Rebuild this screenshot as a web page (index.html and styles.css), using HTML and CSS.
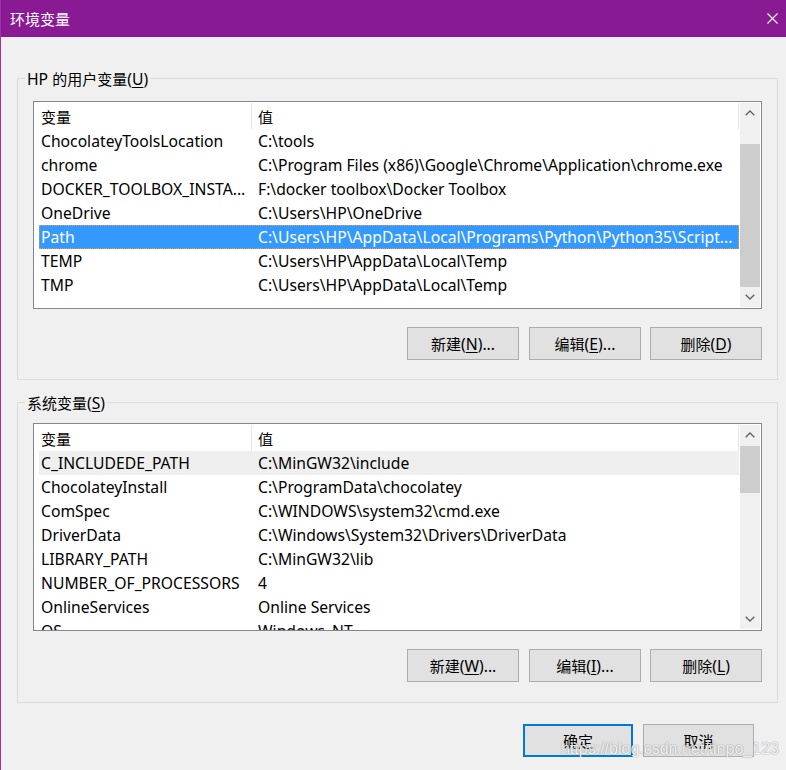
FILE: index.html
```html
<!DOCTYPE html>
<html lang="zh-CN">
<head>
<meta charset="utf-8">
<title>环境变量</title>
<link rel="stylesheet" href="styles.css">
</head>
<body>
<div class="window">
  <div class="titlebar">
    <span class="title cjk">环境变量</span>
    <svg class="close" width="11" height="11" viewBox="0 0 11 11"><path d="M0.5 0.5 L10.5 10.5 M10.5 0.5 L0.5 10.5" stroke="#fff" stroke-width="1.1" fill="none"/></svg>
  </div>
  <div class="content">
    <section class="group group--user">
      <div class="group-title">HP <span class="cjk">的用户变量</span>(<u>U</u>)</div>
      <div class="listbox">
        <div class="list-main">
          <div class="list-head">
            <div class="head-cell col-name"><span class="cjk">变量</span></div>
            <div class="head-cell col-val"><span class="cjk">值</span></div>
          </div>
          <div class="row"><div class="col-name">ChocolateyToolsLocation</div><div class="col-val">C:\tools</div></div>
          <div class="row"><div class="col-name">chrome</div><div class="col-val">C:\Program Files (x86)\Google\Chrome\Application\chrome.exe</div></div>
          <div class="row"><div class="col-name">DOCKER_TOOLBOX_INSTA...</div><div class="col-val">F:\docker toolbox\Docker Toolbox</div></div>
          <div class="row"><div class="col-name">OneDrive</div><div class="col-val">C:\Users\HP\OneDrive</div></div>
          <div class="row row--selected"><div class="col-name">Path</div><div class="col-val">C:\Users\HP\AppData\Local\Programs\Python\Python35\Script...</div></div>
          <div class="row"><div class="col-name">TEMP</div><div class="col-val">C:\Users\HP\AppData\Local\Temp</div></div>
          <div class="row"><div class="col-name">TMP</div><div class="col-val">C:\Users\HP\AppData\Local\Temp</div></div>
        </div>
        <div class="scrollbar">
          <div class="sb-btn"><svg width="10" height="6" viewBox="0 0 10 6"><polyline points="0.7,5.3 5,1 9.3,5.3" fill="none" stroke="#606060" stroke-width="1.3"/></svg></div>
          <div class="sb-track"><div class="sb-thumb sb-thumb--user"></div></div>
          <div class="sb-btn"><svg width="10" height="6" viewBox="0 0 10 6"><polyline points="0.7,0.7 5,5 9.3,0.7" fill="none" stroke="#606060" stroke-width="1.3"/></svg></div>
        </div>
      </div>
      <div class="btn-row">
        <button class="btn"><span class="cjk">新建</span>(<u>N</u>)...</button>
        <button class="btn"><span class="cjk">编辑</span>(<u>E</u>)...</button>
        <button class="btn"><span class="cjk">删除</span>(<u>D</u>)</button>
      </div>
    </section>

    <section class="group group--system">
      <div class="group-title"><span class="cjk">系统变量</span>(<u>S</u>)</div>
      <div class="listbox">
        <div class="list-main">
          <div class="list-head">
            <div class="head-cell col-name"><span class="cjk">变量</span></div>
            <div class="head-cell col-val"><span class="cjk">值</span></div>
          </div>
          <div class="row row--hot"><div class="col-name">C_INCLUDEDE_PATH</div><div class="col-val">C:\MinGW32\include</div></div>
          <div class="row"><div class="col-name">ChocolateyInstall</div><div class="col-val">C:\ProgramData\chocolatey</div></div>
          <div class="row"><div class="col-name">ComSpec</div><div class="col-val">C:\WINDOWS\system32\cmd.exe</div></div>
          <div class="row"><div class="col-name">DriverData</div><div class="col-val">C:\Windows\System32\Drivers\DriverData</div></div>
          <div class="row"><div class="col-name">LIBRARY_PATH</div><div class="col-val">C:\MinGW32\lib</div></div>
          <div class="row"><div class="col-name">NUMBER_OF_PROCESSORS</div><div class="col-val">4</div></div>
          <div class="row"><div class="col-name">OnlineServices</div><div class="col-val">Online Services</div></div>
          <div class="row"><div class="col-name">OS</div><div class="col-val">Windows_NT</div></div>
        </div>
        <div class="scrollbar">
          <div class="sb-btn"><svg width="10" height="6" viewBox="0 0 10 6"><polyline points="0.7,5.3 5,1 9.3,5.3" fill="none" stroke="#606060" stroke-width="1.3"/></svg></div>
          <div class="sb-track"><div class="sb-thumb sb-thumb--system"></div></div>
          <div class="sb-btn"><svg width="10" height="6" viewBox="0 0 10 6"><polyline points="0.7,0.7 5,5 9.3,0.7" fill="none" stroke="#606060" stroke-width="1.3"/></svg></div>
        </div>
      </div>
      <div class="btn-row">
        <button class="btn"><span class="cjk">新建</span>(<u>W</u>)...</button>
        <button class="btn"><span class="cjk">编辑</span>(<u>I</u>)...</button>
        <button class="btn"><span class="cjk">删除</span>(<u>L</u>)</button>
      </div>
    </section>

    <div class="dialog-buttons">
      <button class="btn btn--ok btn--default"><span class="cjk">确定</span></button>
      <button class="btn btn--cancel"><span class="cjk">取消</span></button>
    </div>
  </div>
  <div class="watermark">https://blog.csdn.net/tinpo_123</div>
</div>
</body>
</html>
```

FILE: styles.css
```css
* {
  box-sizing: border-box;
}

html,
body {
  margin: 0;
  padding: 0;
}

body {
  width: 786px;
  height: 770px;
  overflow: hidden;
  background: #f0f0f0;
  color: #000;
  font-family: "Noto Sans", "Noto Sans CJK SC", sans-serif;
  font-size: 15.7px;
}

.cjk {
  font-family: "Noto Sans CJK SC", sans-serif;
  font-size: 15px;
}

u {
  text-decoration-thickness: 1px;
  text-underline-offset: 2px;
}

.window {
  position: relative;
  height: 770px;
  border-left: 1px solid #9b34a8;
}

.titlebar {
  height: 37px;
  background: #891a93;
  display: flex;
  align-items: center;
  padding: 0 8px 0 9px;
  color: #fff;
}

.title {
  line-height: 20px;
}

.close {
  margin-left: auto;
  display: block;
}

.content {
  padding: 41px 8px 0 16px;
}

.group {
  border: 1px solid #dcdcdc;
  padding: 0 15px 19px 15px;
}

.group--system {
  margin-top: 22px;
  padding-bottom: 20px;
}

.group-title {
  width: fit-content;
  height: 20px;
  line-height: 20px;
  margin: -10px 0 0 -8px;
  padding: 0 2px;
  background: #f0f0f0;
  white-space: nowrap;
}

.listbox {
  margin-top: 12px;
  height: 208px;
  border: 1px solid #828790;
  background: #fff;
  display: flex;
}

.group--system .listbox {
  margin-top: 10px;
}

.list-main {
  flex: 1;
  min-width: 0;
  padding-left: 5px;
  overflow: hidden;
}

.list-head {
  display: flex;
  height: 27px;
  padding-top: 1px;
}

.head-cell {
  height: 26px;
  padding-top: 2px;
  line-height: 24px;
  border-right: 1px solid #e5e5e5;
}

.col-name {
  flex: none;
  width: 213px;
  padding-left: 2px;
  white-space: nowrap;
  overflow: hidden;
}

.col-val {
  flex: 1;
  min-width: 0;
  padding-left: 6px;
  white-space: nowrap;
  overflow: hidden;
}

.row {
  display: flex;
  height: 24px;
  line-height: 24px;
}

.row--selected {
  background: #3399ff;
  color: #fff;
  outline: 1px dotted #e8984a;
  outline-offset: -1px;
}

.row--hot {
  background: #efefef;
}

.scrollbar {
  flex: none;
  width: 20px;
  margin: 1px;
  background: #f0f0f0;
  display: flex;
  flex-direction: column;
}

.sb-btn {
  flex: none;
  height: 20px;
  display: flex;
  align-items: center;
  justify-content: center;
}

.sb-btn svg {
  display: block;
}

.sb-track {
  flex: 1;
}

.sb-thumb {
  background: #cdcdcd;
}

.sb-thumb--user {
  margin-top: 21px;
  height: 143px;
}

.sb-thumb--system {
  margin-top: 1px;
  height: 47px;
}

.btn-row {
  display: flex;
  justify-content: flex-end;
  gap: 10px;
  margin-top: 18px;
}

.btn-row .btn:last-child {
  margin-left: -1px;
}

.btn {
  width: 112px;
  height: 33px;
  margin: 0;
  padding: 0;
  background: #e1e1e1;
  border: 1px solid #adadad;
  border-radius: 0;
  color: #000;
  font: inherit;
  display: flex;
  align-items: center;
  justify-content: center;
  white-space: nowrap;
}

.dialog-buttons {
  display: flex;
  justify-content: flex-end;
  gap: 10px;
  margin-top: 21px;
  padding-right: 24px;
}

.btn--ok {
  width: 110px;
}

.btn--cancel {
  width: 111px;
}

.btn--default {
  border: 2px solid #0078d7;
}

.watermark {
  position: absolute;
  left: 560px;
  top: 740px;
  font-family: "Liberation Sans", sans-serif;
  font-size: 16px;
  line-height: 18px;
  color: rgba(255, 255, 255, 0.9);
  text-shadow: 0 0 1px rgba(0, 0, 0, 0.35), 0 0 2px rgba(0, 0, 0, 0.2);
  white-space: nowrap;
}
```
